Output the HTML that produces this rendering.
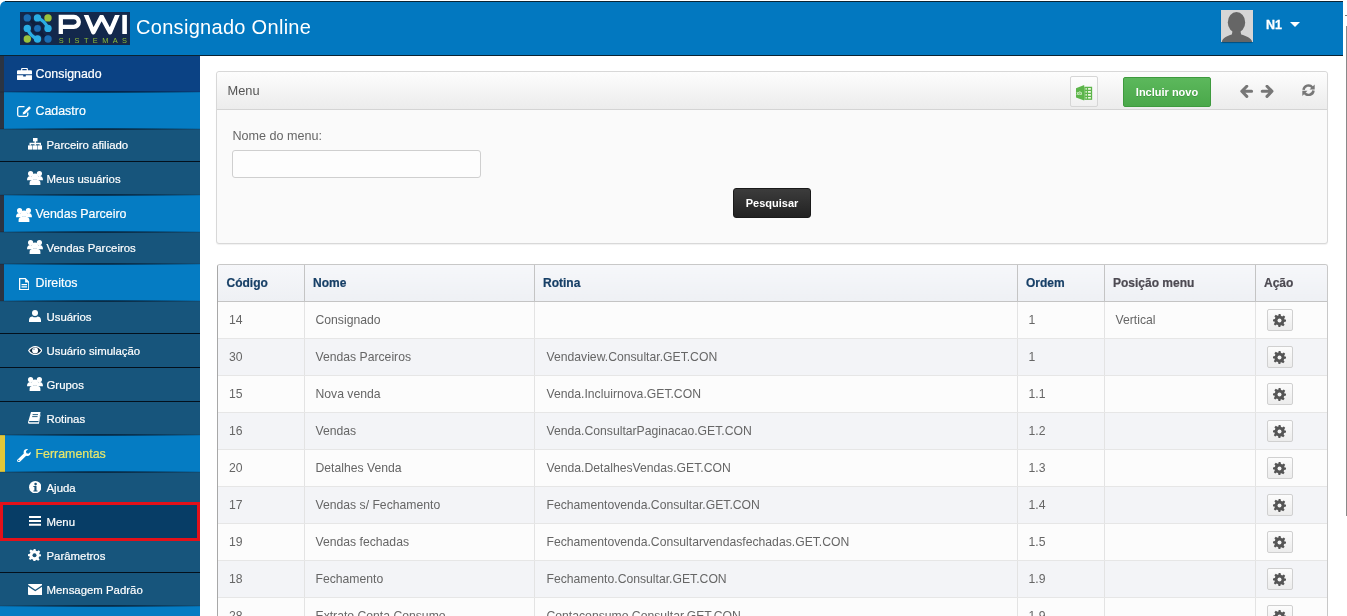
<!DOCTYPE html>
<html><head><meta charset="utf-8">
<style>
*{box-sizing:border-box;margin:0;padding:0}
html,body{width:1347px;height:616px;overflow:hidden;background:#fff;font-family:"Liberation Sans",sans-serif}
body{will-change:transform}
#hdr{position:absolute;left:0;top:1px;width:1343px;height:55px;background:#0278c0;border-bottom:1px solid #0a2434;border-top-left-radius:6px}
#hdrt{position:absolute;left:5px;top:1px;width:1338px;height:1px;background:#0a2434}
#logo{position:absolute;left:20px;top:12px}
#title{position:absolute;left:136px;top:13.8px;color:#fff;font-size:20px;letter-spacing:0.3px;line-height:26px;white-space:nowrap}
#avatar{position:absolute;left:1221px;top:10px;width:32px;height:32px;border-radius:2px;box-shadow:0 1px 1px rgba(0,0,0,.35)}
#uname{position:absolute;left:1266px;top:18px;color:#fff;font-weight:bold;font-size:12.5px;line-height:14px;-webkit-text-stroke:0.3px #fff}
#caret{position:absolute;left:1290px;top:22px;width:0;height:0;border-left:5px solid transparent;border-right:5px solid transparent;border-top:5px solid #fff}
#scr{position:absolute;left:1346px;top:26px;width:1px;height:490px;background:#8a8a8a}
#side{position:absolute;left:0;top:56px;width:200px;height:560px;background:#17557c}
.it{position:absolute;left:0;width:200px;color:#fff;white-space:nowrap;overflow:hidden}
.it .ic{position:absolute;display:block;line-height:0}
.it .tx{position:absolute;top:0;-webkit-text-stroke:0.2px currentColor}
.top{background:#057cc3;font-size:12.4px;box-shadow:inset 4px 0 0 #2b3443}
.top .tx{left:35.5px}
.dk{background:#0b4284}
.last{box-shadow:none}
.fer{box-shadow:inset 5px 0 0 #e3c83a}
.fer .tx{color:#e8e66a}
.sub{background:#17557c;font-size:11.4px}
.bb{border-bottom:1px solid #03101c;box-shadow:0 1px 0 rgba(0,0,0,.12)}
.sh{position:absolute;left:0;width:200px;height:2px;background:radial-gradient(ellipse 60% 100% at 50% 50%,rgba(0,10,25,.75),rgba(0,10,25,0))}
.sub .tx{left:46.5px}
.sel{background:#073d66}
#redbox{position:absolute;left:0;top:502px;width:200px;height:39px;border:3px solid #e4111a}
#main{position:absolute;left:200px;top:56px;width:1145px;height:560px;background:#fff}
#panel{position:absolute;left:216px;top:71px;width:1112px;height:173px;box-shadow:0 1px 1px rgba(0,0,0,.06);background:#fafafa;border:1px solid #d8d8d8;border-radius:3px}
#ph{position:absolute;left:0;top:0;width:1110px;height:38px;background:linear-gradient(#fdfdfd,#ececec);border-bottom:1px solid #d4d4d4;border-radius:3px 3px 0 0}
#ph .t{position:absolute;left:10.5px;top:12px;font-size:12.8px;line-height:14px;color:#555}
#xls{position:absolute;left:853px;top:4px;width:28px;height:31px;border:1px solid #d6d6d6;border-radius:2px;background:linear-gradient(#fdfdfd,#f0f0f0)}
#inc{position:absolute;left:906px;top:5px;width:88px;height:30px;border:1px solid #3e9a3e;border-radius:2px;background:linear-gradient(#5cb85c,#4aa84a);color:#fff;font-weight:bold;font-size:11px;line-height:28px;text-align:center;text-shadow:0 1px 0 rgba(0,0,0,.15)}
#arrows{position:absolute;left:1023px;top:12px}
#refresh{position:absolute;left:1085px;top:10px}
#lbl{position:absolute;left:15.5px;top:57px;font-size:12.6px;line-height:14px;color:#666}
#inp{position:absolute;left:15px;top:78px;width:249px;height:28px;border:1px solid #cfcfcf;border-radius:3px;background:#fdfdfd}
#pesq{position:absolute;left:516px;top:116px;width:78px;height:30px;border-radius:3px;background:linear-gradient(#3c3c3c,#222);border:1px solid #1a1a1a;color:#fff;font-weight:bold;font-size:11px;line-height:28px;text-align:center}
#tbl{position:absolute;left:217px;top:264px;width:1111px;border:1px solid #c8c8c8;border-left-color:#a8a8a8;border-bottom:none;border-radius:3px 3px 0 0;overflow:hidden}
table{border-collapse:collapse;width:1109px;table-layout:fixed}
th{height:36px;background:linear-gradient(#f6f7fa,#eef0f4);border-bottom:1px solid #c4c4c4;border-left:1px solid #c4c4c4;text-align:left;font-size:12px;color:#173f66;font-weight:bold;padding-left:8.5px}
th:first-child{border-left:none}
th.g{color:#4d4a52}
th{-webkit-text-stroke:0.2px currentColor}
td{height:37px;border-bottom:1px solid #e6e6e6;border-left:1px solid #e3e3e3;font-size:12.2px;color:#666;padding-left:11px;white-space:nowrap;overflow:hidden}
td:first-child{border-left:none}
tr.even td{background:#fcfcfc}
tr.odd td{background:#f3f4f7}
td.c6{padding-left:11px}
td.c3{padding-left:12px}
.gb{display:inline-block;width:26px;height:22px;border:1px solid #d0d0d0;border-radius:2px;background:linear-gradient(#fcfcfc,#ececec);vertical-align:middle;text-align:center;line-height:0;padding-top:4px}
</style></head><body>
<div id="hdr"></div><div id="hdrt"></div>
<div id="logo"><svg width="110" height="33" viewBox="0 0 110 33">
<defs><clipPath id="wc"><rect x="0" y="2.9" width="110" height="30"/></clipPath></defs>
<rect width="110" height="33" fill="#13284b"/>
<path d="M7.3 5.9 C12 8 14 12 17.5 16.4 C21 21 23 25 28 27" stroke="#0e1f3c" stroke-width="3.2" fill="none"/>
<path d="M17.5 5.9 Q25 8.5 28 16.4 M7.3 16.4 Q10 24 17.5 27" stroke="#2aaee4" stroke-width="3.2" fill="none"/>
<circle cx="17.5" cy="16.4" r="5.2" fill="none" stroke="#0f2242" stroke-width="1.8"/>
<circle cx="7.3" cy="5.9" r="3.7" fill="#1a6db3"/>
<circle cx="17.5" cy="5.9" r="3.7" fill="#2aaee4"/>
<circle cx="28" cy="5.9" r="3.7" fill="#99c23c"/>
<circle cx="7.3" cy="16.4" r="3.7" fill="#2aaee4"/>
<circle cx="17.5" cy="16.4" r="3.4" fill="#1a6db3"/>
<circle cx="28" cy="16.4" r="3.7" fill="#2aaee4"/>
<circle cx="7.3" cy="27" r="3.7" fill="#99c23c"/>
<circle cx="17.5" cy="27" r="3.7" fill="#2aaee4"/>
<circle cx="28" cy="27" r="3.7" fill="#1a6db3"/>
<path d="M40.8 22 V5 H53.9 A4.9 4.9 0 0 1 58.8 9.9 A4.9 4.9 0 0 1 53.9 14.8 H40.8" stroke="#fff" stroke-width="4.3" fill="none" stroke-linejoin="miter"/>
<path d="M64 -2 L73.4 20.3 L81.6 4.6 L90 20.3 L99.5 -2" stroke="#fff" stroke-width="4.4" fill="none" stroke-linejoin="round" clip-path="url(#wc)"/>
<rect x="102.3" y="2.9" width="4.6" height="19.1" fill="#fff"/>
<text x="38.8" y="31.1" font-family="Liberation Sans" font-size="7.4" fill="#8dbd3a" textLength="68.2" lengthAdjust="spacing">SISTEMAS</text>
</svg></div>
<div id="title">Consignado Online</div>
<div id="avatar"><svg width="32" height="32" viewBox="0 0 32 32"><rect width="32" height="32" fill="#d6d6d6"/><ellipse cx="15.5" cy="12.4" rx="8.7" ry="10.4" fill="#666"/><path d="M0.8 32 C1.5 28 6 26.2 10.8 24.6 L11.8 20 H19.2 L20.2 24.6 C25 26.2 30.5 28 31.2 32z" fill="#666"/></svg></div>
<div id="uname">N1</div>
<div id="caret"></div>
<div id="scr"></div><div style="position:absolute;left:1345px;top:15px;width:2px;height:1px;background:#777"></div>
<div id="side">
</div>
<div style="position:absolute;left:0;top:0">
<div class="it top dk" style="top:56px;height:36px;line-height:36px"><span class="ic" style="left:16.7px;top:11.8px"><svg width="15" height="12.2" viewBox="0 0 15 12.2"><path d="M5 0h5a0.9 0.9 0 0 1 0.9 0.9V2.2H14a1 1 0 0 1 1 1V6.2H0V3.2a1 1 0 0 1 1-1h3.1V0.9A0.9 0.9 0 0 1 5 0zM5.3 1.1v1.1h4.4V1.1z M0 7.3h6.2v1.1h2.6V7.3H15v3.9a1 1 0 0 1-1 1H1a1 1 0 0 1-1-1z" fill="#fff" fill-rule="evenodd"/></svg></span><span class="tx" style="top:0px">Consignado</span></div>
<div class="it top" style="top:92px;height:37px;line-height:37px"><span class="ic" style="left:16.8px;top:14.0px"><svg width="14.2" height="11" viewBox="0 0 14.2 11"><path d="M7.5 0.7H2.2A1.5 1.5 0 0 0 0.7 2.2V8.8A1.5 1.5 0 0 0 2.2 10.3H9.3A1.5 1.5 0 0 0 10.8 8.8V6.5" stroke="#fff" stroke-width="1.3" fill="none"/><path d="M12.2 0.2L14 2 8 8 5.6 8.6 6.2 6.2z" fill="#fff"/></svg></span><span class="tx" style="top:1px">Cadastro</span></div>
<div class="it sub bb" style="top:129px;height:33px;line-height:33px"><span class="ic" style="left:27.7px;top:9.2px"><svg width="14.5" height="11.6" viewBox="0 0 14.5 11.6"><rect x="5" y="0" width="4.5" height="3.4" fill="#fff"/><path d="M7.25 3v2.5M2.2 7.6V5.5h10.1V7.6M7.25 5.5V7.6" stroke="#fff" stroke-width="1.4" fill="none"/><rect x="0" y="7.4" width="4.5" height="4.2" fill="#fff"/><rect x="5" y="7.4" width="4.5" height="4.2" fill="#fff"/><rect x="10" y="7.4" width="4.5" height="4.2" fill="#fff"/></svg></span><span class="tx" style="top:0px">Parceiro afiliado</span></div>
<div class="it sub" style="top:162px;height:33px;line-height:33px"><span class="ic" style="left:26.8px;top:8.9px"><svg width="16" height="14" viewBox="0 0 16 14"><circle cx="3.6" cy="2.6" r="2.6" fill="#fff"/><circle cx="12.4" cy="2.6" r="2.6" fill="#fff"/><path d="M0 9.2 C0 6.2 1.4 5 3.4 5 C5.4 5 6.6 6.2 6.6 9.2z M9.4 9.2 C9.4 6.2 10.6 5 12.6 5 C14.6 5 16 6.2 16 9.2z" fill="#fff"/><circle cx="8" cy="5.6" r="3.1" fill="#fff"/><path d="M2.6 14 V12 C2.6 9.6 5 8.6 8 8.6 C11 8.6 13.4 9.6 13.4 12 V14z" fill="#fff"/></svg></span><span class="tx" style="top:1px">Meus usuários</span></div>
<div class="it top" style="top:195px;height:37px;line-height:37px"><span class="ic" style="left:15.9px;top:12.8px"><svg width="16" height="14" viewBox="0 0 16 14"><circle cx="3.6" cy="2.6" r="2.6" fill="#fff"/><circle cx="12.4" cy="2.6" r="2.6" fill="#fff"/><path d="M0 9.2 C0 6.2 1.4 5 3.4 5 C5.4 5 6.6 6.2 6.6 9.2z M9.4 9.2 C9.4 6.2 10.6 5 12.6 5 C14.6 5 16 6.2 16 9.2z" fill="#fff"/><circle cx="8" cy="5.6" r="3.1" fill="#fff"/><path d="M2.6 14 V12 C2.6 9.6 5 8.6 8 8.6 C11 8.6 13.4 9.6 13.4 12 V14z" fill="#fff"/></svg></span><span class="tx" style="top:1px">Vendas Parceiro</span></div>
<div class="it sub" style="top:232px;height:32px;line-height:32px"><span class="ic" style="left:27.3px;top:7.7px"><svg width="16" height="14" viewBox="0 0 16 14"><circle cx="3.6" cy="2.6" r="2.6" fill="#fff"/><circle cx="12.4" cy="2.6" r="2.6" fill="#fff"/><path d="M0 9.2 C0 6.2 1.4 5 3.4 5 C5.4 5 6.6 6.2 6.6 9.2z M9.4 9.2 C9.4 6.2 10.6 5 12.6 5 C14.6 5 16 6.2 16 9.2z" fill="#fff"/><circle cx="8" cy="5.6" r="3.1" fill="#fff"/><path d="M2.6 14 V12 C2.6 9.6 5 8.6 8 8.6 C11 8.6 13.4 9.6 13.4 12 V14z" fill="#fff"/></svg></span><span class="tx" style="top:0px">Vendas Parceiros</span></div>
<div class="it top" style="top:264px;height:37px;line-height:37px"><span class="ic" style="left:18.8px;top:13.8px"><svg width="10.5" height="12.4" viewBox="0 0 10.5 12.4"><path d="M0.65 0.65 H6.3 L9.85 4.2 V11.75 H0.65 Z" stroke="#fff" stroke-width="1.3" fill="none"/><path d="M6.1 0.65 L9.85 4.4 H6.1z" fill="#fff"/><path d="M2.5 6.6 H8 M2.5 8.8 H8" stroke="#fff" stroke-width="1.2"/></svg></span><span class="tx" style="top:1px">Direitos</span></div>
<div class="it sub bb" style="top:301px;height:33px;line-height:33px"><span class="ic" style="left:29.0px;top:8.9px"><svg width="12" height="12" viewBox="0 0 12 12"><ellipse cx="6" cy="3" rx="3" ry="3" fill="#fff"/><path d="M0 12 V10 C0 7.5 1.8 6.4 3.5 6.4 C4.2 7 5 7.2 6 7.2 C7 7.2 7.8 7 8.5 6.4 C10.2 6.4 12 7.5 12 10 V12z" fill="#fff"/></svg></span><span class="tx" style="top:0px">Usuários</span></div>
<div class="it sub bb" style="top:334px;height:34px;line-height:34px"><span class="ic" style="left:27.8px;top:11.8px"><svg width="14.5" height="9.2" viewBox="0 0 14.5 9.2"><path d="M0 4.6 C1.8 1.5 4.4 0 7.25 0 S12.7 1.5 14.5 4.6 C12.7 7.7 10.1 9.2 7.25 9.2 S1.8 7.7 0 4.6z" fill="#fff"/><path d="M1.4 4.6 C3 2.3 5 1.2 7.25 1.2 S11.5 2.3 13.1 4.6 C11.5 6.9 9.5 8 7.25 8 S3 6.9 1.4 4.6z" fill="#0c2a40"/><circle cx="7.1" cy="4.5" r="3" fill="#fff"/><circle cx="6" cy="3.1" r="0.7" fill="#195378"/></svg></span><span class="tx" style="top:0px">Usuário simulação</span></div>
<div class="it sub bb" style="top:368px;height:34px;line-height:34px"><span class="ic" style="left:27.3px;top:8.9px"><svg width="16" height="14" viewBox="0 0 16 14"><circle cx="3.6" cy="2.6" r="2.6" fill="#fff"/><circle cx="12.4" cy="2.6" r="2.6" fill="#fff"/><path d="M0 9.2 C0 6.2 1.4 5 3.4 5 C5.4 5 6.6 6.2 6.6 9.2z M9.4 9.2 C9.4 6.2 10.6 5 12.6 5 C14.6 5 16 6.2 16 9.2z" fill="#fff"/><circle cx="8" cy="5.6" r="3.1" fill="#fff"/><path d="M2.6 14 V12 C2.6 9.6 5 8.6 8 8.6 C11 8.6 13.4 9.6 13.4 12 V14z" fill="#fff"/></svg></span><span class="tx" style="top:0px">Grupos</span></div>
<div class="it sub" style="top:402px;height:33px;line-height:33px"><span class="ic" style="left:28.3px;top:9.9px"><svg width="12.6" height="11.7" viewBox="0 0 12.6 11.7"><path d="M3 0H12.6L10.6 8.9H1.6C1.1 8.9 0.9 9.4 1.2 9.9 L1.3 10.2H10.4L12.3 2.2L12.6 2.6L10.9 11.7H1C0.2 11.7-0.2 10.8 0.1 9.9z" fill="#fff"/><path d="M4.6 2.6H10M4.2 4.6H9.6" stroke="#195378" stroke-width="0.9"/></svg></span><span class="tx" style="top:1px">Rotinas</span></div>
<div class="it top fer" style="top:435px;height:37px;line-height:37px"><span class="ic" style="left:17.1px;top:14.0px"><svg width="14" height="13.2" viewBox="0 0 14 13.2"><path d="M13.6 2.8C14.1 4.7 12.8 7 10.4 7C10 7 9.6 6.9 9.2 6.8L3 12.7C2.3 13.4 1.3 13.4 0.6 12.7C-0.1 12.1-0.1 11.1 0.6 10.4L6.8 4.5C6.7 4.1 6.6 3.7 6.6 3.3C6.6 0.9 9 -0.3 11 0.2L8.9 2.2L9.4 4.3L11.5 4.7z" fill="#fff"/><circle cx="1.8" cy="11.5" r="0.7" fill="#057cc3"/></svg></span><span class="tx" style="top:1px">Ferramentas</span></div>
<div class="it sub bb" style="top:472px;height:33px;line-height:33px"><span class="ic" style="left:28.5px;top:8.6px"><svg width="12.5" height="12.4" viewBox="0 0 12.5 12.4"><circle cx="6.25" cy="6.2" r="6.2" fill="#fff"/><circle cx="6.6" cy="3.1" r="1.3" fill="#195378"/><path d="M4.4 5H7.5V9.5H8.5V10.6H4.4V9.5H5.4V6.1H4.4z" fill="#195378"/></svg></span><span class="tx" style="top:0px">Ajuda</span></div>
<div class="it sub sel bb" style="top:505px;height:34px;line-height:34px"><span class="ic" style="left:28.6px;top:11.0px"><svg width="12.7" height="9.8" viewBox="0 0 12.7 9.8"><path d="M0 1h12.7M0 4.9h12.7M0 8.8h12.7" stroke="#fff" stroke-width="2"/></svg></span><span class="tx" style="top:0px">Menu</span></div>
<div class="it sub bb" style="top:539px;height:34px;line-height:34px"><span class="ic" style="left:28.3px;top:10.0px"><svg width="13" height="12.4" viewBox="0 0 13 12.4"><path d="M5.5 0h2l0.4 1.7 1.3 0.6 1.6-1 1.4 1.4-1 1.5 0.6 1.3L13 5.2v2l-1.8 0.4-0.6 1.3 1 1.5-1.4 1.4-1.6-1-1.3 0.6L7.5 12.4h-2l-0.4-1.7-1.3-0.6-1.6 1-1.4-1.4 1-1.5-0.6-1.3L0 7.2v-2l1.8-0.4 0.6-1.3-1-1.5 1.4-1.4 1.6 1 1.3-0.6z" fill="#fff"/><circle cx="6.5" cy="6.2" r="2" fill="#195378"/></svg></span><span class="tx" style="top:0px">Parâmetros</span></div>
<div class="it sub" style="top:573px;height:33px;line-height:33px"><span class="ic" style="left:27.7px;top:10.9px"><svg width="14.5" height="11" viewBox="0 0 14.5 11"><path d="M0.8 0h12.9c0.4 0 0.8 0.4 0.8 0.8L7.25 5.7 0 0.8C0 0.4 0.4 0 0.8 0z" fill="#fff"/><path d="M0 2.4l7.25 4.9 7.25-4.9V10.2c0 0.4-0.4 0.8-0.8 0.8H0.8C0.4 11 0 10.6 0 10.2z" fill="#fff"/></svg></span><span class="tx" style="top:1px">Mensagem Padrão</span></div>
<div class="it top last" style="top:606px;height:37px;line-height:37px"><span class="tx" style="top:0px"></span></div>
<div class="sh" style="top:91px"></div>
<div class="sh" style="top:128px"></div>
<div class="sh" style="top:194px"></div>
<div class="sh" style="top:231px"></div>
<div class="sh" style="top:263px"></div>
<div class="sh" style="top:300px"></div>
<div class="sh" style="top:434px"></div>
<div class="sh" style="top:471px"></div>
<div class="sh" style="top:605px"></div>
</div>
<div id="redbox"></div>
<div id="panel">
 <div id="ph"><span class="t">Menu</span>
  <div id="xls"><svg width="28" height="31" viewBox="0 0 28 31" style="position:absolute;left:-1px;top:-1px"><path d="M6 12.2 L14.2 9 V24.6 L6 21.6z" fill="#5cb54a"/><text x="6.6" y="18.6" font-family="Liberation Sans" font-size="4.6" font-weight="bold" fill="#e8f5dc">xb</text><rect x="14.9" y="11.4" width="6.6" height="11.8" fill="#f3f9e6" stroke="#5cb54a" stroke-width="1.3"/><path d="M14.9 14.4h6.6 M14.9 17.3h6.6 M14.9 20.3h6.6 M17.4 11.4v11.8" stroke="#5cb54a" stroke-width="1.3"/></svg></div>
  <div id="inc">Incluir novo</div>
  <div id="arrows"><svg width="34" height="13" viewBox="0 0 34 13"><path d="M6.8 1.2 L1.8 6.3 L6.8 11.4 M2.5 6.3 H11.6" stroke="#777" stroke-width="3" fill="none" stroke-linecap="round" stroke-linejoin="round"/><path d="M27 1.2 L32 6.3 L27 11.4 M31.3 6.3 H22.2" stroke="#777" stroke-width="3" fill="none" stroke-linecap="round" stroke-linejoin="round"/></svg></div>
  <div id="refresh"><svg width="13" height="12.4" viewBox="0 0 13 12.4"><path d="M1.5 5.9 A5 5 0 0 1 10.4 3.4" stroke="#777" stroke-width="2.5" fill="none"/><path d="M12.7 0.4 V5.6 H7.5z" fill="#777"/><path d="M11.5 6.5 A5 5 0 0 1 2.6 9" stroke="#777" stroke-width="2.5" fill="none"/><path d="M0.3 12 V6.8 H5.5z" fill="#777"/></svg></div>
 </div>
 <div id="lbl">Nome do menu:</div>
 <div id="inp"></div>
 <div id="pesq">Pesquisar</div>
</div>
<div id="tbl"><table>
<colgroup><col style="width:86px"><col style="width:230px"><col style="width:483px"><col style="width:87px"><col style="width:151px"><col style="width:72px"></colgroup>
<tr><th>Código</th><th>Nome</th><th>Rotina</th><th>Ordem</th><th class="g">Posição menu</th><th class="g">Ação</th></tr>
<tr class="even"><td class="c1">14</td><td class="c2">Consignado</td><td class="c3"></td><td class="c4">1</td><td class="c5">Vertical</td><td class="c6"><span class="gb"><svg width="13" height="13" viewBox="0 0 13 13"><path d="M5.5 0h2l0.4 1.8 1.3 0.6 1.6-1 1.4 1.4-1 1.6 0.6 1.3L13 5.5v2l-1.8 0.4-0.6 1.3 1 1.6-1.4 1.4-1.6-1-1.3 0.6L7.5 13h-2l-0.4-1.8-1.3-0.6-1.6 1-1.4-1.4 1-1.6-0.6-1.3L0 7.5v-2l1.8-0.4 0.6-1.3-1-1.6 1.4-1.4 1.6 1 1.3-0.6z" fill="#555"/><circle cx="6.5" cy="6.5" r="2" fill="#f4f4f4"/></svg></span></td></tr>
<tr class="odd"><td class="c1">30</td><td class="c2">Vendas Parceiros</td><td class="c3">Vendaview.Consultar.GET.CON</td><td class="c4">1</td><td class="c5"></td><td class="c6"><span class="gb"><svg width="13" height="13" viewBox="0 0 13 13"><path d="M5.5 0h2l0.4 1.8 1.3 0.6 1.6-1 1.4 1.4-1 1.6 0.6 1.3L13 5.5v2l-1.8 0.4-0.6 1.3 1 1.6-1.4 1.4-1.6-1-1.3 0.6L7.5 13h-2l-0.4-1.8-1.3-0.6-1.6 1-1.4-1.4 1-1.6-0.6-1.3L0 7.5v-2l1.8-0.4 0.6-1.3-1-1.6 1.4-1.4 1.6 1 1.3-0.6z" fill="#555"/><circle cx="6.5" cy="6.5" r="2" fill="#f4f4f4"/></svg></span></td></tr>
<tr class="even"><td class="c1">15</td><td class="c2">Nova venda</td><td class="c3">Venda.Incluirnova.GET.CON</td><td class="c4">1.1</td><td class="c5"></td><td class="c6"><span class="gb"><svg width="13" height="13" viewBox="0 0 13 13"><path d="M5.5 0h2l0.4 1.8 1.3 0.6 1.6-1 1.4 1.4-1 1.6 0.6 1.3L13 5.5v2l-1.8 0.4-0.6 1.3 1 1.6-1.4 1.4-1.6-1-1.3 0.6L7.5 13h-2l-0.4-1.8-1.3-0.6-1.6 1-1.4-1.4 1-1.6-0.6-1.3L0 7.5v-2l1.8-0.4 0.6-1.3-1-1.6 1.4-1.4 1.6 1 1.3-0.6z" fill="#555"/><circle cx="6.5" cy="6.5" r="2" fill="#f4f4f4"/></svg></span></td></tr>
<tr class="odd"><td class="c1">16</td><td class="c2">Vendas</td><td class="c3">Venda.ConsultarPaginacao.GET.CON</td><td class="c4">1.2</td><td class="c5"></td><td class="c6"><span class="gb"><svg width="13" height="13" viewBox="0 0 13 13"><path d="M5.5 0h2l0.4 1.8 1.3 0.6 1.6-1 1.4 1.4-1 1.6 0.6 1.3L13 5.5v2l-1.8 0.4-0.6 1.3 1 1.6-1.4 1.4-1.6-1-1.3 0.6L7.5 13h-2l-0.4-1.8-1.3-0.6-1.6 1-1.4-1.4 1-1.6-0.6-1.3L0 7.5v-2l1.8-0.4 0.6-1.3-1-1.6 1.4-1.4 1.6 1 1.3-0.6z" fill="#555"/><circle cx="6.5" cy="6.5" r="2" fill="#f4f4f4"/></svg></span></td></tr>
<tr class="even"><td class="c1">20</td><td class="c2">Detalhes Venda</td><td class="c3">Venda.DetalhesVendas.GET.CON</td><td class="c4">1.3</td><td class="c5"></td><td class="c6"><span class="gb"><svg width="13" height="13" viewBox="0 0 13 13"><path d="M5.5 0h2l0.4 1.8 1.3 0.6 1.6-1 1.4 1.4-1 1.6 0.6 1.3L13 5.5v2l-1.8 0.4-0.6 1.3 1 1.6-1.4 1.4-1.6-1-1.3 0.6L7.5 13h-2l-0.4-1.8-1.3-0.6-1.6 1-1.4-1.4 1-1.6-0.6-1.3L0 7.5v-2l1.8-0.4 0.6-1.3-1-1.6 1.4-1.4 1.6 1 1.3-0.6z" fill="#555"/><circle cx="6.5" cy="6.5" r="2" fill="#f4f4f4"/></svg></span></td></tr>
<tr class="odd"><td class="c1">17</td><td class="c2">Vendas s/ Fechamento</td><td class="c3">Fechamentovenda.Consultar.GET.CON</td><td class="c4">1.4</td><td class="c5"></td><td class="c6"><span class="gb"><svg width="13" height="13" viewBox="0 0 13 13"><path d="M5.5 0h2l0.4 1.8 1.3 0.6 1.6-1 1.4 1.4-1 1.6 0.6 1.3L13 5.5v2l-1.8 0.4-0.6 1.3 1 1.6-1.4 1.4-1.6-1-1.3 0.6L7.5 13h-2l-0.4-1.8-1.3-0.6-1.6 1-1.4-1.4 1-1.6-0.6-1.3L0 7.5v-2l1.8-0.4 0.6-1.3-1-1.6 1.4-1.4 1.6 1 1.3-0.6z" fill="#555"/><circle cx="6.5" cy="6.5" r="2" fill="#f4f4f4"/></svg></span></td></tr>
<tr class="even"><td class="c1">19</td><td class="c2">Vendas fechadas</td><td class="c3">Fechamentovenda.Consultarvendasfechadas.GET.CON</td><td class="c4">1.5</td><td class="c5"></td><td class="c6"><span class="gb"><svg width="13" height="13" viewBox="0 0 13 13"><path d="M5.5 0h2l0.4 1.8 1.3 0.6 1.6-1 1.4 1.4-1 1.6 0.6 1.3L13 5.5v2l-1.8 0.4-0.6 1.3 1 1.6-1.4 1.4-1.6-1-1.3 0.6L7.5 13h-2l-0.4-1.8-1.3-0.6-1.6 1-1.4-1.4 1-1.6-0.6-1.3L0 7.5v-2l1.8-0.4 0.6-1.3-1-1.6 1.4-1.4 1.6 1 1.3-0.6z" fill="#555"/><circle cx="6.5" cy="6.5" r="2" fill="#f4f4f4"/></svg></span></td></tr>
<tr class="odd"><td class="c1">18</td><td class="c2">Fechamento</td><td class="c3">Fechamento.Consultar.GET.CON</td><td class="c4">1.9</td><td class="c5"></td><td class="c6"><span class="gb"><svg width="13" height="13" viewBox="0 0 13 13"><path d="M5.5 0h2l0.4 1.8 1.3 0.6 1.6-1 1.4 1.4-1 1.6 0.6 1.3L13 5.5v2l-1.8 0.4-0.6 1.3 1 1.6-1.4 1.4-1.6-1-1.3 0.6L7.5 13h-2l-0.4-1.8-1.3-0.6-1.6 1-1.4-1.4 1-1.6-0.6-1.3L0 7.5v-2l1.8-0.4 0.6-1.3-1-1.6 1.4-1.4 1.6 1 1.3-0.6z" fill="#555"/><circle cx="6.5" cy="6.5" r="2" fill="#f4f4f4"/></svg></span></td></tr>
<tr class="even"><td class="c1">28</td><td class="c2">Extrato Conta Consumo</td><td class="c3">Contaconsumo.Consultar.GET.CON</td><td class="c4">1.9</td><td class="c5"></td><td class="c6"><span class="gb"><svg width="13" height="13" viewBox="0 0 13 13"><path d="M5.5 0h2l0.4 1.8 1.3 0.6 1.6-1 1.4 1.4-1 1.6 0.6 1.3L13 5.5v2l-1.8 0.4-0.6 1.3 1 1.6-1.4 1.4-1.6-1-1.3 0.6L7.5 13h-2l-0.4-1.8-1.3-0.6-1.6 1-1.4-1.4 1-1.6-0.6-1.3L0 7.5v-2l1.8-0.4 0.6-1.3-1-1.6 1.4-1.4 1.6 1 1.3-0.6z" fill="#555"/><circle cx="6.5" cy="6.5" r="2" fill="#f4f4f4"/></svg></span></td></tr>
</table></div>
</body></html>
